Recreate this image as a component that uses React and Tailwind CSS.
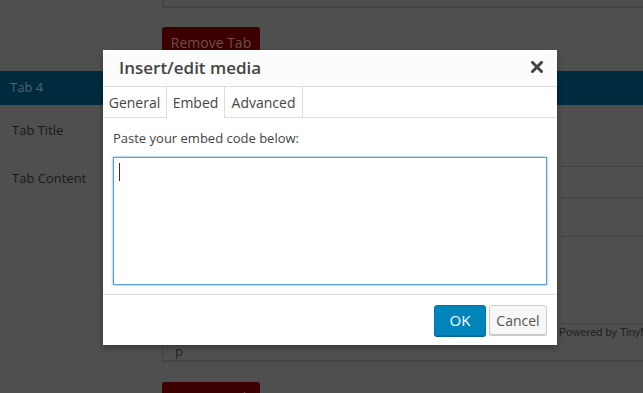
import React from 'react';

const font = { fontFamily: '"Open Sans", "Noto Sans", Arial, sans-serif' };

const RemoveTab = ({ className = '' }) => (
  <div
    className={`ml-[162px] flex h-[30px] w-[98px] shrink-0 items-center justify-center rounded-t-[3px] bg-[#3d0000] text-[14px] text-[#6a5050] ${className}`}
  >
    Remove Tab
  </div>
);

const Backdrop = () => (
  <div className="flex w-[643px] flex-col bg-[#4f4f4f] text-[13px]" style={font}>
    {/* top editor box, cut off by the window */}
    <div className="ml-[162px] h-[8px] shrink-0 border-b-2 border-l-2 border-[#444]" />
    <RemoveTab className="mt-[19px]" />
    <div className="mt-[14px] flex h-[34px] shrink-0 items-center bg-[#002a3d] pl-[10px] text-[13px] text-[#4d6773]">Tab 4</div>
    <div className="flex h-[61px] shrink-0">
      <div className="w-[162px] pl-[12px] pt-[16px] text-[#1a1a1a]">Tab Title</div>
      <div className="flex-1" />
    </div>
    <div className="flex shrink-0">
      <div className="w-[162px] pl-[12px] pt-[3px] text-[#1a1a1a]">Tab Content</div>
      <div className="flex flex-1 flex-col border-l border-t border-[#444]">
        <div className="h-[31px] border-b border-[#444]" />
        <div className="h-[39px] border-b border-[#444]" />
        <div className="h-[87px] border-b border-[#444]" />
        <div className="relative h-[38px] border-b-2 border-[#444]">
          <span
            className="absolute left-[396px] top-[0px] whitespace-nowrap text-[11px] leading-[16px] text-[#1f1f1f]"
            style={{ fontFamily: '"Liberation Sans", Arial, sans-serif' }}
          >
            Powered by TinyMCE
          </span>
          <span className="absolute left-[12px] top-[18px] text-[13px] leading-[18px] text-[#1f1f1f]">p</span>
        </div>
      </div>
    </div>
    <RemoveTab className="mt-[20px]" />
  </div>
);

const Modal = () => (
  <div
    className="absolute left-[103px] top-[50px] flex h-[295px] w-[454px] flex-col bg-white shadow-[0_3px_6px_rgba(0,0,0,0.3)]"
    style={font}
  >
    <div className="flex h-[37px] shrink-0 items-center justify-between border-b border-[#ddd] bg-[#fcfcfc] pl-[16px] pr-[14px]">
      <span className="text-[17px] font-semibold text-[#444]">Insert/edit media</span>
      <svg width="12" height="12" viewBox="0 0 12 12" className="mt-[-2px]">
        <path d="M1.5 1.5L10.5 10.5M10.5 1.5L1.5 10.5" stroke="#444" strokeWidth="3" strokeLinecap="square" />
      </svg>
    </div>
    <div className="flex h-[31px] shrink-0 text-[14px] text-[#444]">
      <div className="flex w-[64px] items-center justify-center border-b border-r border-[#ddd]">General</div>
      <div className="flex w-[58px] items-center justify-center border-r border-[#ddd]">Embed</div>
      <div className="flex w-[78px] items-center justify-center border-b border-r border-[#ddd]">Advanced</div>
      <div className="flex-1 border-b border-[#ddd]" />
    </div>
    <div className="shrink-0 px-[10px]">
      <div className="pt-[11px] text-[13px] leading-[18px] text-[#444]">Paste your embed code below:</div>
      <div className="relative mt-[10px] h-[128px] border border-[#5b9dd9] shadow-[0_0_2px_rgba(30,140,190,0.8)]">
        <span className="absolute left-[5px] top-[5px] h-[18px] w-px bg-[#333]" />
      </div>
    </div>
    <div className="mt-[9px] flex flex-1 items-center justify-end gap-[3px] border-t border-[#ddd] pr-[10px]">
      <button className="h-[31px] w-[52px] rounded-[3px] border border-[#0073aa] bg-[#0085ba] text-[15px] text-white shadow-[0_1px_0_#006799]">
        OK
      </button>
      <button className="h-[30px] w-[58px] rounded-[3px] border border-[#ccc] bg-[#f7f7f7] text-[14px] text-[#555] shadow-[0_1px_0_#ccc]">
        Cancel
      </button>
    </div>
  </div>
);

export default function App() {
  return (
    <div className="relative h-[393px] w-[643px] overflow-hidden">
      <Backdrop />
      <Modal />
    </div>
  );
}
